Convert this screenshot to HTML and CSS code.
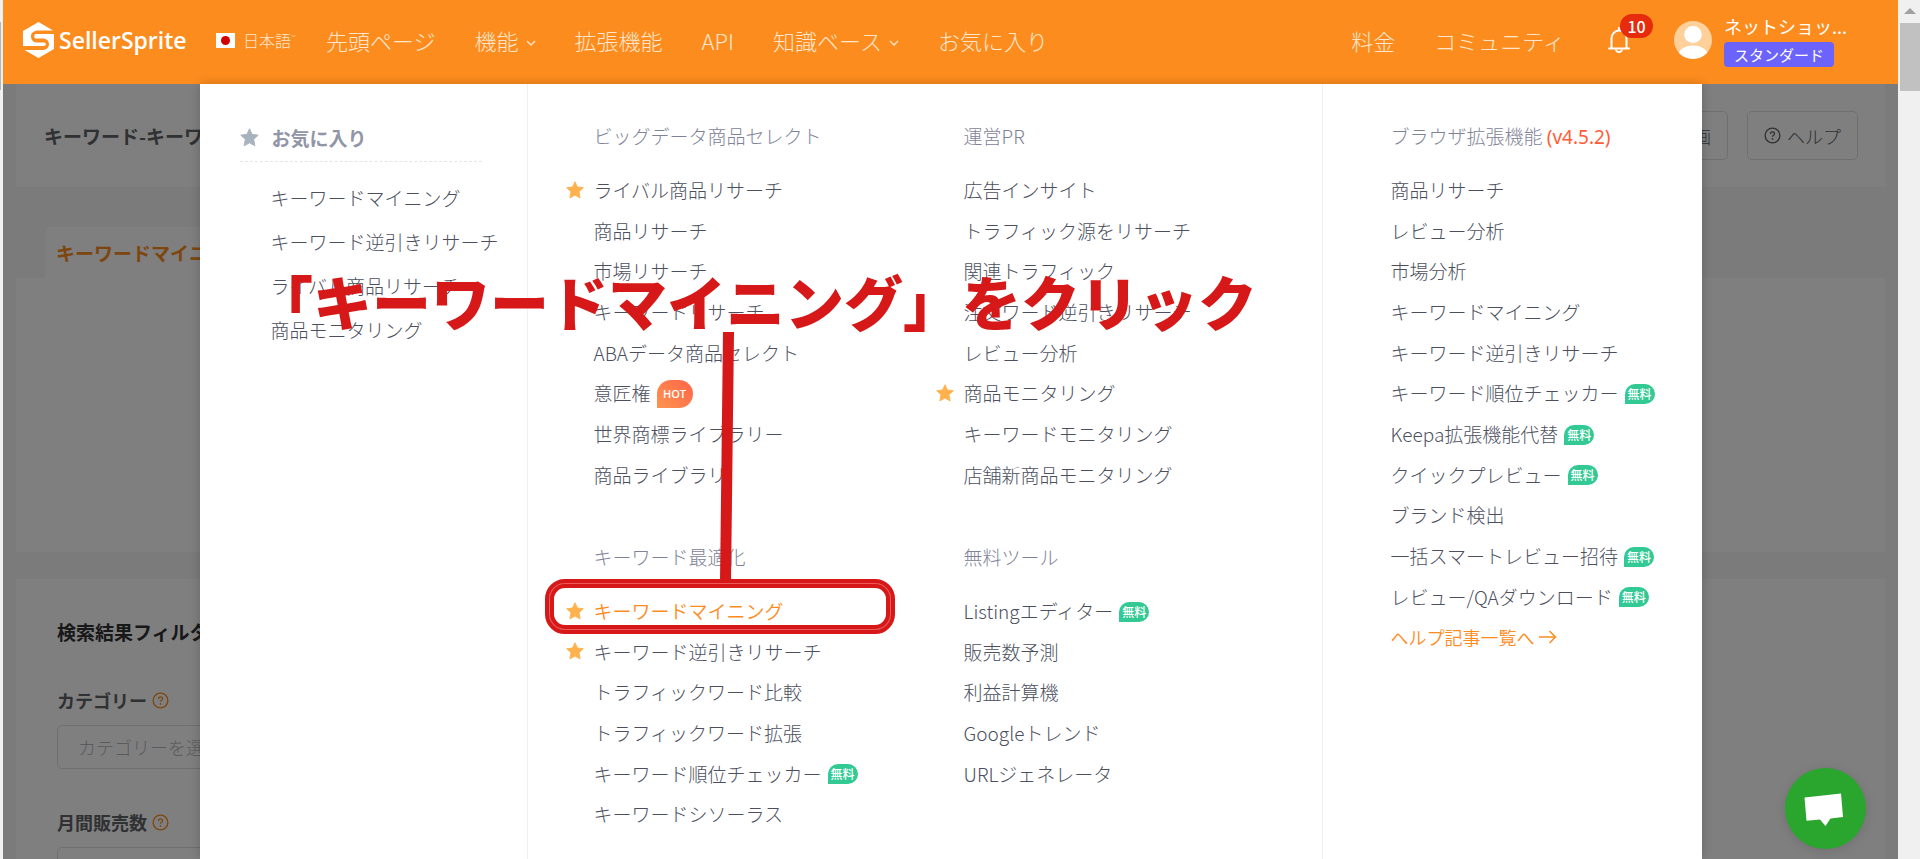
FILE: index.html
```html
<!DOCTYPE html>
<html lang="ja">
<head>
<meta charset="utf-8">
<title>SellerSprite</title>
<link rel="stylesheet" href="styles.css">
</head>
<body>
<svg class="defs" aria-hidden="true">
  <symbol id="star" viewBox="0 0 20 20"><path d="M10 .8l2.700 5.900 6.500.8-4.800 4.400 1.300 6.900L10 15.600l-5.700 3.200 1.300-6.900L.8 7.500l6.500-.8z" fill="currentColor" stroke="currentColor" stroke-width="1" stroke-linejoin="round"/></symbol>
  <symbol id="caret" viewBox="0 0 10 8"><path d="M1 2l4 4 4-4" fill="none" stroke="currentColor" stroke-width="1.300"/></symbol>
  <symbol id="help" viewBox="0 0 18 18"><circle cx="9" cy="9" r="7.800" fill="none" stroke="currentColor" stroke-width="1.400"/><path d="M6.900 7.300c0-1.300.9-2.100 2.100-2.100s2.100.8 2.100 1.900c0 1.600-2.100 1.700-2.100 3.300" fill="none" stroke="currentColor" stroke-width="1.400"/><circle cx="9" cy="12.600" r=".9" fill="currentColor"/></symbol>
</svg>
<div class="frame">
  <div class="edge"><div class="edge-thumb"></div></div>
  <div class="app">
    <header class="header">
      <a class="logo" href="#">
        <svg class="logo-mark" viewBox="0 0 31 36"><path d="M15.500 0L30 8.500H16C10.500 8.500 8 11 8 14.500s2.500 6 6 6h7c2.500 0 2.500 3.500 0 3.500H0V9z" fill="#fff"/><path d="M31 12v15L15.500 36 1.500 28H19c4.500 0 7-2.500 7-5.800s-2.500-5.700-6-5.700h-7c-2.500 0-2.500-4.500 0-4.500z" fill="#fff"/></svg>
        <span>SellerSprite</span>
      </a>
      <button class="lang"><svg class="flag" viewBox="0 0 19 15"><path d="M0 0h19v15H0z" fill="#fff"/><circle cx="9.500" cy="7.500" r="4.500" fill="#d30000"/></svg>日本語<svg class="lang-caret" viewBox="0 0 10 8"><use href="#caret"/></svg></button>
      <nav class="nav">
        <a href="#">先頭ページ</a>
        <a href="#">機能<svg class="caret"><use href="#caret"/></svg></a>
        <a href="#">拡張機能</a>
        <a href="#">API</a>
        <a href="#">知識ベース<svg class="caret"><use href="#caret"/></svg></a>
        <a href="#">お気に入り</a>
      </nav>
      <nav class="nav nav-right">
        <a href="#">料金</a>
        <a href="#">コミュニティ</a>
      </nav>
      <button class="bell" aria-label="通知">
        <svg class="bell-icon" viewBox="0 0 22 26"><path d="M11 1v2.500M3.500 21.500V11.500a7.500 8 0 0 1 15 0v10M1 21.500h20" fill="none" stroke="#fff" stroke-width="2" stroke-linecap="round"/><path d="M8 22.500a3 2.500 0 0 0 6 0" fill="none" stroke="#fff" stroke-width="1.800"/></svg>
        <span class="count">10</span>
      </button>
      <svg class="avatar" viewBox="0 0 38 38"><defs><clipPath id="round"><circle cx="19" cy="19" r="19"/></clipPath></defs><g clip-path="url(#round)"><path d="M0 0h38v38H0z" fill="#ffd09a"/><ellipse cx="19" cy="13.500" rx="8.800" ry="8.500" fill="#fff"/><ellipse cx="19" cy="35" rx="15" ry="10.500" fill="#fff"/></g></svg>
      <div class="user"><span class="user-name">ネットショッ...</span><span class="plan">スタンダード</span></div>
    </header>

    <main class="page">
      <section class="card title-card">
        <h1>キーワード-キーワードマイニング</h1>
        <div class="actions">
          <button class="ghost">動画</button>
          <button class="ghost"><svg class="help"><use href="#help"/></svg>ヘルプ</button>
        </div>
      </section>
      <div class="tabs"><button class="tab">キーワードマイニング</button></div>
      <section class="card search-card"></section>
      <section class="card filter-card">
        <h2>検索結果フィルター</h2>
        <div class="field">
          <label for="category">カテゴリー<svg class="help tip"><use href="#help"/></svg></label>
          <input id="category" type="text" placeholder="カテゴリーを選択">
        </div>
        <div class="field">
          <label for="sales">月間販売数<svg class="help tip"><use href="#help"/></svg></label>
          <input id="sales" type="text">
        </div>
      </section>
    </main>

    <div class="mask">
      <div class="menu">
        <section class="favorites">
          <h3><svg class="fav-star"><use href="#star"/></svg>お気に入り</h3>
          <ul>
            <li><a href="#">キーワードマイニング</a></li>
            <li><a href="#">キーワード逆引きリサーチ</a></li>
            <li><a href="#">ライバル商品リサーチ</a></li>
            <li><a href="#">商品モニタリング</a></li>
          </ul>
        </section>
        <div class="tools">
          <section class="group">
            <h3>ビッグデータ商品セレクト</h3>
            <ul>
              <li><svg class="star"><use href="#star"/></svg><a href="#">ライバル商品リサーチ</a></li>
              <li><a href="#">商品リサーチ</a></li>
              <li><a href="#">市場リサーチ</a></li>
              <li><a href="#">キーワードリサーチ</a></li>
              <li><a href="#">ABAデータ商品セレクト</a></li>
              <li><a href="#">意匠権</a><span class="hot">HOT</span></li>
              <li><a href="#">世界商標ライブラリー</a></li>
              <li><a href="#">商品ライブラリ</a></li>
            </ul>
          </section>
          <section class="group">
            <h3>運営PR</h3>
            <ul>
              <li><a href="#">広告インサイト</a></li>
              <li><a href="#">トラフィック源をリサーチ</a></li>
              <li><a href="#">関連トラフィック</a></li>
              <li><a href="#">注文ワード逆引きリサーチ</a></li>
              <li><a href="#">レビュー分析</a></li>
              <li><svg class="star"><use href="#star"/></svg><a href="#">商品モニタリング</a></li>
              <li><a href="#">キーワードモニタリング</a></li>
              <li><a href="#">店舗新商品モニタリング</a></li>
            </ul>
          </section>
          <section class="group">
            <h3>キーワード最適化</h3>
            <ul>
              <li><svg class="star"><use href="#star"/></svg><a class="active" href="#">キーワードマイニング</a></li>
              <li><svg class="star"><use href="#star"/></svg><a href="#">キーワード逆引きリサーチ</a></li>
              <li><a href="#">トラフィックワード比較</a></li>
              <li><a href="#">トラフィックワード拡張</a></li>
              <li><a href="#">キーワード順位チェッカー</a><span class="free">無料</span></li>
              <li><a href="#">キーワードシソーラス</a></li>
            </ul>
          </section>
          <section class="group">
            <h3>無料ツール</h3>
            <ul>
              <li><a href="#">Listingエディター</a><span class="free">無料</span></li>
              <li><a href="#">販売数予測</a></li>
              <li><a href="#">利益計算機</a></li>
              <li><a href="#">Googleトレンド</a></li>
              <li><a href="#">URLジェネレータ</a></li>
            </ul>
          </section>
        </div>
        <section class="group extension">
          <h3>ブラウザ拡張機能 <span class="version">(v4.5.2)</span></h3>
          <ul>
            <li><a href="#">商品リサーチ</a></li>
            <li><a href="#">レビュー分析</a></li>
            <li><a href="#">市場分析</a></li>
            <li><a href="#">キーワードマイニング</a></li>
            <li><a href="#">キーワード逆引きリサーチ</a></li>
            <li><a href="#">キーワード順位チェッカー</a><span class="free">無料</span></li>
            <li><a href="#">Keepa拡張機能代替</a><span class="free">無料</span></li>
            <li><a href="#">クイックプレビュー</a><span class="free">無料</span></li>
            <li><a href="#">ブランド検出</a></li>
            <li><a href="#">一括スマートレビュー招待</a><span class="free">無料</span></li>
            <li><a href="#">レビュー/QAダウンロード</a><span class="free">無料</span></li>
            <li><a class="more" href="#">ヘルプ記事一覧へ<svg class="arrow" viewBox="0 0 18 14"><path d="M0 7h16M10.500 1l6 6-6 6" fill="none" stroke="currentColor" stroke-width="1.500"/></svg></a></li>
          </ul>
        </section>
      </div>
    </div>

    <button class="chat" aria-label="チャット"><svg viewBox="0 0 81 81"><path d="M19.500 29.500L56 25.500l2 23.500-12.500 1.500L40.500 58 35 51.500l-13.500 1.300z" fill="#fff"/></svg></button>
  </div>
  <div class="scrollbar"><div class="scroll-up"></div><div class="scroll-thumb"></div></div>

  <p class="caption">「キーワードマイニング」をクリック</p>
  <svg class="pointer" viewBox="0 0 14 250"><path d="M3 0h11l-3 250H0z" fill="#d61818"/></svg>
  <div class="highlight"></div>
</div>
</body>
</html>
```
FILE: styles.css
```css
* { box-sizing: border-box; }
body {
  margin: 0;
  font-family: "Noto Sans CJK JP", sans-serif;
  font-size: 19px;
  font-weight: 300;
  color: #4c505e;
}
h1, h2, h3, ul, p { margin: 0; padding: 0; }
ul { list-style: none; }
a { color: inherit; text-decoration: none; }
button { border: 0; padding: 0; background: none; font: inherit; color: inherit; cursor: pointer; }
.defs { position: absolute; width: 0; height: 0; }

.frame { position: relative; display: flex; height: 100vh; overflow: hidden; background: #f1f1f1; }
.edge { width: 3px; padding-top: 22px; }
.edge-thumb { width: 1px; height: 68px; background: #b5b5b5; }
.app { position: relative; flex: 1; min-width: 0; display: flex; flex-direction: column; }
.scrollbar { width: 22px; display: flex; flex-direction: column; align-items: center; gap: 9px; padding: 8px 0 0 2px; background: #f0f0f0; }
.scroll-up { border: 6px solid transparent; border-top-width: 0; border-bottom-color: #a0a0a0; }
.scroll-thumb { width: 20px; height: 68px; background: #c1c1c1; }

/* Header */
.header {
  display: flex;
  align-items: center;
  height: 84px;
  flex: none;
  padding: 0 45px 4px 20px;
  background: #fd8c1e;
  color: #ffe6cc;
  white-space: nowrap;
}
.logo { display: flex; align-items: center; gap: 5px; width: 193px; font-family: "Open Sans", sans-serif; font-size: 23px; font-weight: 600; color: #fff; }
.logo-mark { width: 31px; height: 36px; }
.lang { display: flex; align-items: center; font-size: 16px; width: 110px; }
.flag { width: 19px; height: 15px; margin-right: 8px; }
.lang-caret { width: 5px; height: 4px; margin-bottom: 8px; }
.nav { display: flex; gap: 39px; font-size: 22px; }
.nav a { display: flex; align-items: center; }
.caret { width: 10px; height: 8px; margin: 6px 0 0 7px; }
.nav-right { margin-left: auto; }
.bell { position: relative; width: 22px; height: 26px; margin: 0 44px 0 43px; }
.bell-icon { display: block; width: 22px; height: 26px; }
.count {
  position: absolute; left: 12px; bottom: 15px;
  width: 33px; height: 24px; border-radius: 12px;
  background: #e62c0c; color: #fff; font-size: 16px; line-height: 24px; font-weight: 500; text-align: center;
}
.avatar { width: 38px; height: 38px; margin-right: 12px; }
.user { display: flex; flex-direction: column; align-items: flex-start; gap: 3px; width: 129px; color: #fff; }
.user-name { font-size: 18px; line-height: 26px; font-weight: 400; }
.plan { padding: 0 10px; border-radius: 4px; background: #6b63fb; font-size: 15px; line-height: 25px; font-weight: 400; }

/* Page under the mask */
.page { flex: 1; min-height: 0; overflow: hidden; padding: 0 13px; background: #f6f6f9; }
.card { background: #fff; }
.title-card { display: flex; align-items: center; justify-content: space-between; height: 103px; padding: 0 27px 0 28px; color: #606266; }
.title-card h1 { font-size: 19px; font-weight: 700; }
.actions { display: flex; gap: 19px; }
.ghost { display: flex; align-items: center; gap: 6px; height: 49px; padding: 0 16px; border: 1px solid #dcdfe6; border-radius: 5px; font-size: 18px; }
.help { width: 17px; height: 17px; }
.tabs { display: flex; padding: 40px 0 0 29px; }
.tab { height: 51px; padding: 0 11px; background: #fff; border-radius: 5px 5px 0 0; font-weight: 700; color: #fd8c1e; }
.search-card { height: 274px; }
.filter-card { margin-top: 27px; padding: 33px 41px; }
.filter-card h2 { font-size: 19px; line-height: 40px; font-weight: 700; color: #303133; }
.field { padding-top: 35px; }
.field + .field { padding-top: 40px; }
.field label { display: flex; align-items: center; gap: 5px; height: 26px; font-size: 18px; font-weight: 700; color: #606266; }
.tip { color: #fd8c1e; }
.field input { display: block; width: 400px; height: 44px; margin-top: 12px; padding: 0 20px; border: 1px solid #dcdfe6; border-radius: 5px; font: inherit; font-size: 18px; }
.field input::placeholder { color: #b4b7c0; }

/* Mega menu */
.mask { position: absolute; inset: 84px 0 0; background: rgba(0, 0, 0, .5); }
.menu {
  display: grid;
  grid-template-columns: 327px 1fr 379px;
  max-width: 1502px;
  height: 100%;
  margin: 0 auto;
  background: #fff;
  box-shadow: 0 0 10px rgba(0, 0, 0, .2);
  white-space: nowrap;
}
.favorites { padding: 34px 0 0 40px; }
.favorites h3 { display: flex; align-items: center; gap: 13px; height: 44px; margin-right: 45px; padding-bottom: 4px; border-bottom: 1px dashed #e3e5ea; font-size: 19px; font-weight: 700; color: #9195a8; }
.fav-star { width: 19px; height: 19px; color: #a9b3bf; }
.favorites ul { padding: 13px 0 0 31px; }
.favorites li { display: flex; align-items: center; height: 44px; }
.tools {
  display: grid;
  grid-template-columns: 370px 1fr;
  align-content: start;
  row-gap: 43px;
  padding: 32px 0 0 66px;
  border: solid #efeff2;
  border-width: 0 1px;
}
.group h3 { height: 40px; margin-bottom: 13px; font-size: 19px; line-height: 40px; font-weight: 300; color: #7f8398; }
.group li { position: relative; display: flex; align-items: center; height: 40px; }
.group li:nth-child(3n), .group li:nth-child(3n + 1) { height: 41px; }
.extension { padding: 32px 0 0 68px; }
.star { position: absolute; left: -28px; width: 18px; height: 18px; color: #ffb14e; }
.active, .more { color: #fd8c1e; font-weight: 350; }
.version { color: #ff5c38; font-family: "Noto Sans", sans-serif; font-weight: 400; }
.free { margin: 2px 0 0 6px; width: 30px; border-radius: 10px 10px 10px 0; background: #33c994; color: #fff; font-size: 12px; line-height: 20px; font-weight: 500; text-align: center; }
.hot { margin: 2px 0 0 6px; width: 36px; border-radius: 14px 14px 14px 0; background: linear-gradient(45deg, #ff9450, #ff6448); color: #fff; font-family: "Open Sans", sans-serif; font-size: 11px; line-height: 28px; font-weight: 600; text-align: center; }
.more { display: flex; align-items: center; gap: 4px; font-size: 18px; }
.arrow { width: 18px; height: 14px; }

.chat { position: absolute; right: 32px; bottom: 10px; width: 81px; height: 81px; border-radius: 50%; background: #2aa52e; box-shadow: 0 2px 12px rgba(0, 0, 0, .12); }
.chat svg { display: block; }

/* Annotation */
.caption { position: absolute; left: 254px; top: 259px; font-size: 59px; line-height: 84px; font-weight: 900; color: #d61818; white-space: nowrap; }
.pointer { position: absolute; left: 720px; top: 332px; width: 14px; height: 250px; }
.highlight { position: absolute; left: 545px; top: 579px; width: 350px; height: 55px; border: 4px solid #d61818; border-radius: 20px; box-shadow: inset 0 0 0 1px #ec5a5a, inset 0 0 0 5px #d61818; }
```
